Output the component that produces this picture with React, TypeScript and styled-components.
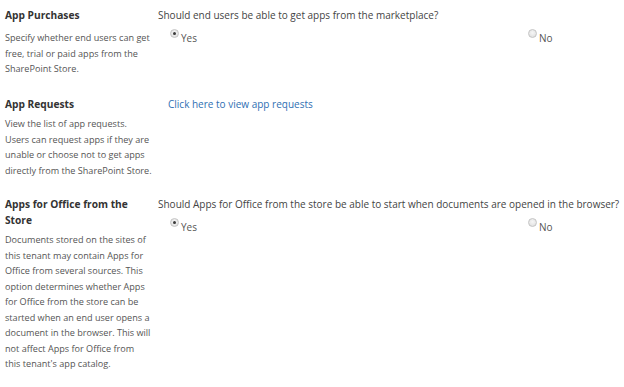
import React from "react";
import styled, { createGlobalStyle } from "styled-components";

const Global = createGlobalStyle`
  body {
    margin: 0;
    background: #ffffff;
    font-family: "Open Sans", "Noto Sans", sans-serif;
  }
`;

const Page = styled.main`
  width: 624px;
  height: 387px;
  padding: 7px 0 0 5px;
  box-sizing: border-box;
  overflow: hidden;
  display: flex;
  flex-direction: column;
`;

const Section = styled.section<{ $height: number }>`
  display: grid;
  grid-template-columns: 151px 1fr;
  column-gap: 2px;
  height: ${(p) => p.$height}px;
`;

const Info = styled.div`
  display: flex;
  flex-direction: column;
`;

const Title = styled.h3`
  margin: 0 0 4px;
  font-size: 10.2px;
  line-height: 16px;
  font-weight: 700;
  color: #333333;
`;

const Desc = styled.p<{ $offset?: number }>`
  margin: ${(p) => p.$offset ?? 0}px 0 0;
  font-size: 9.1px;
  line-height: 15.5px;
  color: #555555;
`;

const Line = styled.span`
  display: block;
  white-space: nowrap;
`;

const Control = styled.div<{ $pad?: number }>`
  padding-left: ${(p) => p.$pad ?? 0}px;
  font-size: 10px;
  line-height: 16px;
`;

const Question = styled.div`
  font-size: 10px;
  line-height: 16px;
  color: #444444;
  white-space: nowrap;
`;

const Options = styled.div`
  display: grid;
  grid-template-columns: 358px 1fr;
  padding: 4px 0 0 12px;
`;

const Option = styled.label`
  display: flex;
  align-items: flex-start;
  gap: 2px;
  font-size: 10px;
  color: #555555;
`;

const Radio = styled.span<{ $checked?: boolean }>`
  width: 7px;
  height: 7px;
  border-radius: 50%;
  border: 1px solid #c4c4c4;
  background: radial-gradient(circle at 50% 40%, #f6f6f6, #dcdcdc);
  display: flex;
  align-items: center;
  justify-content: center;
  margin-top: 2px;
  &::after {
    content: "";
    width: 3px;
    height: 3px;
    border-radius: 50%;
    background: ${(p) => (p.$checked ? "#3a3a3a" : "transparent")};
  }
`;

const OptionText = styled.span`
  padding-top: 5px;
  line-height: 12px;
`;

const Link = styled.a`
  display: block;
  font-size: 10px;
  line-height: 16px;
  color: #2f6fb3;
  text-decoration: none;
`;

const YesNo = () => (
  <Options>
    <Option>
      <Radio $checked />
      <OptionText>Yes</OptionText>
    </Option>
    <Option>
      <Radio />
      <OptionText>No</OptionText>
    </Option>
  </Options>
);

const Lines = ({ lines }: { lines: string[] }) => (
  <>
    {lines.map((l) => (
      <Line key={l}>{l}</Line>
    ))}
  </>
);

export default function App() {
  return (
    <>
      <Global />
      <Page>
        <Section $height={89}>
          <Info>
            <Title>App Purchases</Title>
            <Desc $offset={3}>
              <Lines
                lines={[
                  "Specify whether end users can get",
                  "free, trial or paid apps from the",
                  "SharePoint Store.",
                ]}
              />
            </Desc>
          </Info>
          <Control>
            <Question>Should end users be able to get apps from the marketplace?</Question>
            <YesNo />
          </Control>
        </Section>
        <Section $height={100}>
          <Info>
            <Title>App Requests</Title>
            <Desc>
              <Lines
                lines={[
                  "View the list of app requests.",
                  "Users can request apps if they are",
                  "unable or choose not to get apps",
                  "directly from the SharePoint Store.",
                ]}
              />
            </Desc>
          </Info>
          <Control $pad={10}>
            <Link href="#">Click here to view app requests</Link>
          </Control>
        </Section>
        <Section $height={190}>
          <Info>
            <Title>
              <Line>Apps for Office from the</Line>
              <Line>Store</Line>
            </Title>
            <Desc>
              <Lines
                lines={[
                  "Documents stored on the sites of",
                  "this tenant may contain Apps for",
                  "Office from several sources. This",
                  "option determines whether Apps",
                  "for Office from the store can be",
                  "started when an end user opens a",
                  "document in the browser. This will",
                  "not affect Apps for Office from",
                  "this tenant's app catalog.",
                ]}
              />
            </Desc>
          </Info>
          <Control>
            <Question>
              Should Apps for Office from the store be able to start when documents are opened in
              the browser?
            </Question>
            <YesNo />
          </Control>
        </Section>
      </Page>
    </>
  );
}
